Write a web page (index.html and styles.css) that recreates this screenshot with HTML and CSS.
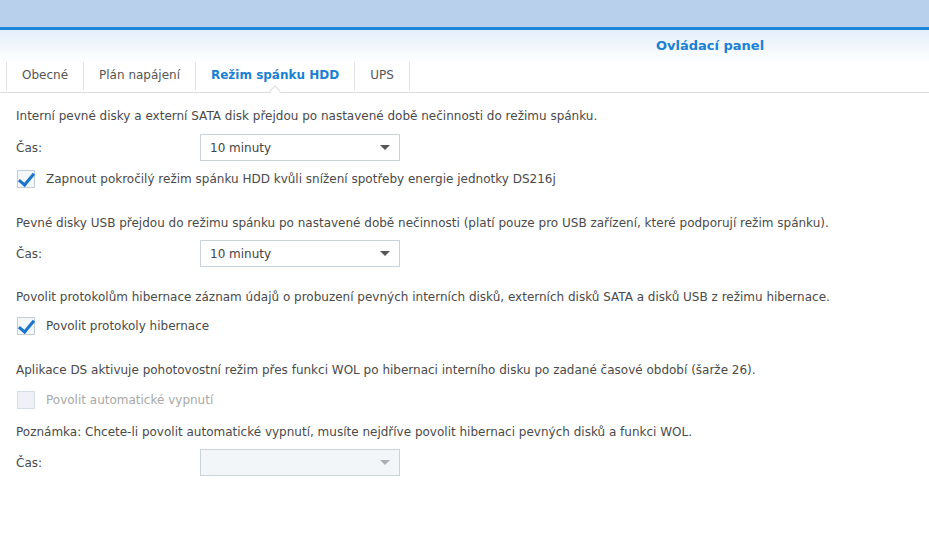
FILE: index.html
```html
<!DOCTYPE html>
<html lang="cs">
<head>
    <meta charset="UTF-8">
    <title>Ovládací panel - Režim spánku HDD</title>
    <link rel="stylesheet" href="styles.css">
</head>
<body>
    <div class="topbar"></div>
    <div class="accent"></div>
    <div class="titlebar">
        <span class="title">Ovládací panel</span>
    </div>

    <!-- záložky -->
    <div class="tabs">
        <div class="tab">Obecné</div>
        <div class="tab">Plán napájení</div>
        <div class="tab active">Režim spánku HDD</div>
        <div class="tab last">UPS</div>
    </div>

    <div class="content">
        <p class="desc">Interní pevné disky a externí SATA disk přejdou po nastavené době nečinnosti do režimu spánku.</p>
        <div class="row first">
            <span class="label">Čas:</span>
            <div class="select"><span>10 minuty</span><i class="arrow"></i></div>
        </div>
        <div class="check">
            <span class="box on"></span>
            <span>Zapnout pokročilý režim spánku HDD kvůli snížení spotřeby energie jednotky DS216j</span>
        </div>

        <p class="desc gap">Pevné disky USB přejdou do režimu spánku po nastavené době nečinnosti (platí pouze pro USB zařízení, které podporují režim spánku).</p>
        <div class="row">
            <span class="label">Čas:</span>
            <div class="select"><span>10 minuty</span><i class="arrow"></i></div>
        </div>

        <p class="desc gap-row">Povolit protokolům hibernace záznam údajů o probuzení pevných interních disků, externích disků SATA a disků USB z režimu hibernace.</p>
        <div class="check after-desc">
            <span class="box on"></span>
            <span>Povolit protokoly hibernace</span>
        </div>

        <p class="desc gap">Aplikace DS aktivuje pohotovostní režim přes funkci WOL po hibernaci interního disku po zadané časové období (šarže 26).</p>
        <div class="check disabled">
            <span class="box"></span>
            <span>Povolit automatické vypnutí</span>
        </div>
        <p class="desc note">Poznámka: Chcete-li povolit automatické vypnutí, musíte nejdříve povolit hibernaci pevných disků a funkci WOL.</p>
        <div class="row">
            <span class="label">Čas:</span>
            <div class="select off"><span></span><i class="arrow"></i></div>
        </div>
    </div>
</body>
</html>
```

FILE: styles.css
```css
body {
    margin: 0;
    font-family: "DejaVu Sans", Verdana, sans-serif;
    font-size: 12px;
    color: #4a4a4a;
    background: #fff;
}

/* horní pruh */
.topbar {
    height: 27px;
    background-color: #b9d0ec;
}
.accent {
    height: 3px;
    background-color: #1b86dc;
}
.titlebar {
    height: 32px;
    background: linear-gradient(#e3eefa, #ffffff);
}
.title {
    display: inline-block;
    margin-left: 656px;
    line-height: 31px;
    font-size: 13px;
    font-weight: bold;
    color: #1b7fd4;
}

/* záložky */
.tabs {
    display: flex;
    height: 30px;
    padding-left: 6px;
    border-bottom: 1px solid #dcdcdc;
}
.tab {
    position: relative;
    padding: 0 15px;
    line-height: 26px;
    height: 28px;
    border-left: 1px solid #e2e2e2;
    color: #555;
}
.tab.last {
    border-right: 1px solid #e2e2e2;
}
.tab.active {
    color: #1b7fd4;
    font-weight: bold;
}
/* zobáček pod aktivní záložkou */
.tab.active::after {
    content: "";
    position: absolute;
    left: 50%;
    bottom: -5px;
    width: 7px;
    height: 7px;
    margin-left: -4px;
    background: #fff;
    border-left: 1px solid #dcdcdc;
    border-top: 1px solid #dcdcdc;
    transform: rotate(45deg);
}

/* obsah */
.content {
    padding: 15px 16px 0;
}
.desc {
    margin: 0;
    line-height: 16px;
}
.desc.gap {
    margin-top: 26px;
}
.desc.gap-row {
    margin-top: 22px;
}
.desc.note {
    margin-top: 14px;
}

.row {
    display: flex;
    align-items: center;
    margin-top: 9px;
}
.row.first {
    margin-top: 10px;
}
.label {
    width: 184px;
}
.select {
    display: flex;
    align-items: center;
    justify-content: space-between;
    box-sizing: border-box;
    width: 200px;
    height: 27px;
    padding: 0 9px;
    border: 1px solid #c9d3dc;
    background: #fff;
    color: #444;
}
.select.off {
    background: #f3f6f9;
}
.arrow {
    width: 0;
    height: 0;
    border-left: 5px solid transparent;
    border-right: 5px solid transparent;
    border-top: 5px solid #555;
}
.select.off .arrow {
    border-top-color: #a9b0b7;
}

.check {
    display: flex;
    align-items: center;
    margin-top: 8px;
    height: 20px;
}
.check.after-desc {
    margin-top: 11px;
}
.box {
    position: relative;
    box-sizing: border-box;
    width: 18px;
    height: 18px;
    margin-left: 1px;
    margin-right: 11px;
    border: 1px solid #c4ccd5;
    background: #f4f7fa;
}
/* fajfka přesahuje přes okraj */
.box.on::after {
    content: "";
    position: absolute;
    left: 4px;
    top: -1px;
    width: 6px;
    height: 13px;
    border-right: 3px solid #1a75cc;
    border-bottom: 3px solid #1a75cc;
    transform: rotate(40deg);
}
.check.disabled {
    color: #a8a8a8;
    margin-top: 12px;
}
.check.disabled .box {
    border-color: #d8dee5;
    background: #eef2f6;
}
```
